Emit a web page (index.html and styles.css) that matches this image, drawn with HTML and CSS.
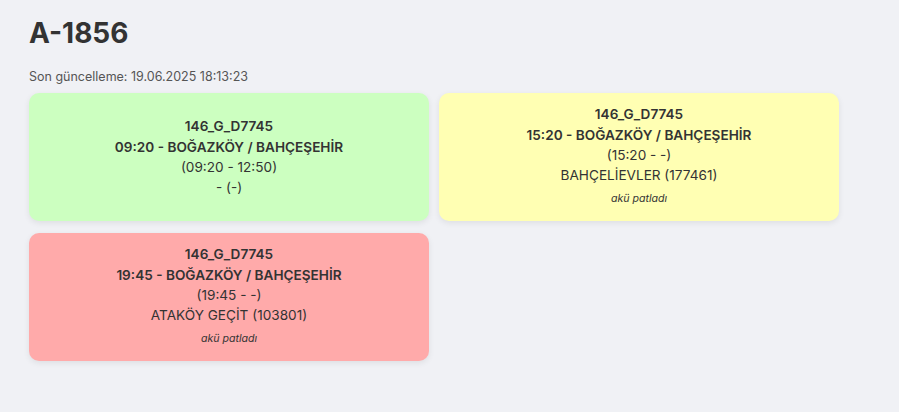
FILE: index.html
```html
<!DOCTYPE html>
<html lang="tr">
<head>
    <meta charset="UTF-8" />
    <meta name="viewport" content="width=device-width, initial-scale=1.0" />
    <title>A-1856</title>
    <link rel="stylesheet" href="styles.css">
</head>
<body>
    <div class="page">
        <h1 class="page__title">A-1856</h1>
        <div class="page__updated">Son güncelleme: 19.06.2025 18:13:23</div>

        <div class="trip-grid">
            <div class="trip-card trip-card--green">
                <div class="trip-card__code">146_G_D7745</div>
                <div class="trip-card__route">09:20 - BOĞAZKÖY / BAHÇEŞEHİR</div>
                <div class="trip-card__line">(09:20 - 12:50)</div>
                <div class="trip-card__line">- (-)</div>
            </div>
            <div class="trip-card trip-card--yellow">
                <div class="trip-card__code">146_G_D7745</div>
                <div class="trip-card__route">15:20 - BOĞAZKÖY / BAHÇEŞEHİR</div>
                <div class="trip-card__line">(15:20 - -)</div>
                <div class="trip-card__line">BAHÇELİEVLER (177461)</div>
                <div class="trip-card__note">akü patladı</div>
            </div>
            <div class="trip-card trip-card--red">
                <div class="trip-card__code">146_G_D7745</div>
                <div class="trip-card__route">19:45 - BOĞAZKÖY / BAHÇEŞEHİR</div>
                <div class="trip-card__line">(19:45 - -)</div>
                <div class="trip-card__line">ATAKÖY GEÇİT (103801)</div>
                <div class="trip-card__note">akü patladı</div>
            </div>
        </div>
    </div>
</body>
</html>
```

FILE: styles.css
```css
/* General styles */
body {
  margin: 0;
  background: #f0f1f5;
  font-family: Inter, "Noto Sans", sans-serif;
  color: #333;
}

.page {
  padding: 15px 29px;
}

.page__title {
  font-size: 28px;
  font-weight: 700;
  margin: 0;
  line-height: 36px;
}

.page__updated {
  font-size: 12.5px;
  color: #555;
  margin-top: 18px;
  margin-bottom: 9px;
}

.trip-grid {
  display: grid;
  grid-template-columns: repeat(2, 400px);
  column-gap: 10px;
  row-gap: 12px;
}

.trip-card {
  height: 128px;
  box-sizing: border-box;
  border-radius: 10px;
  box-shadow: 0 2px 6px rgba(0, 0, 0, 0.08);
  display: flex;
  flex-direction: column;
  justify-content: center;
  align-items: center;
  text-align: center;
  font-size: 13.6px;
  line-height: 20.4px;
}

.trip-card--green {
  background: #ccffc0;
}

.trip-card--yellow {
  background: #ffffb3;
}

.trip-card--red {
  background: #ffaaaa;
}

.trip-card__code,
.trip-card__route {
  font-weight: 600;
}

.trip-card__note {
  font-size: 10.6px;
  font-style: italic;
  line-height: 22px;
  margin-top: 2px;
}
```
